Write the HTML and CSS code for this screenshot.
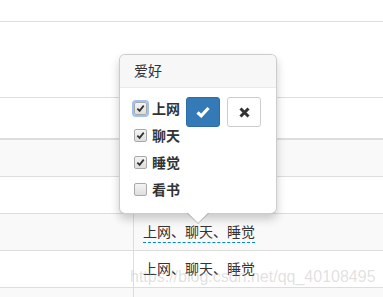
FILE: index.html
```html
<!DOCTYPE html>
<html lang="en">
<head>
    <meta charset="UTF-8">
    <title>爱好</title>
    <link rel="stylesheet" href="styles.css">
</head>
<body>
    <div class="table">
        <div class="row row-top"></div>
        <div class="row row-tall"></div>
        <div class="row row-head"></div>
        <div class="row body-row striped"><div class="cell"></div><div class="cell col2"></div></div>
        <div class="row body-row"><div class="cell"></div><div class="cell col2"></div></div>
        <div class="row body-row striped"><div class="cell"></div><div class="cell col2"><a class="editable" href="#">上网、聊天、睡觉</a></div></div>
        <div class="row body-row"><div class="cell"></div><div class="cell col2">上网、聊天、睡觉</div></div>
        <div class="row body-row striped last"><div class="cell"></div><div class="cell col2"></div></div>
    </div>

    <div class="popover">
        <div class="popover-title">爱好</div>
        <div class="popover-content">
            <div class="checklist">
                <label class="check-item"><span class="box checked focus"><svg viewBox="0 0 10 10" width="9" height="9"><path d="M1.5 5.2 L4 7.6 L8.6 1.8" fill="none" stroke="#333" stroke-width="2"/></svg></span>上网</label>
                <label class="check-item"><span class="box checked"><svg viewBox="0 0 10 10" width="9" height="9"><path d="M1.5 5.2 L4 7.6 L8.6 1.8" fill="none" stroke="#333" stroke-width="2"/></svg></span>聊天</label>
                <label class="check-item"><span class="box checked"><svg viewBox="0 0 10 10" width="9" height="9"><path d="M1.5 5.2 L4 7.6 L8.6 1.8" fill="none" stroke="#333" stroke-width="2"/></svg></span>睡觉</label>
                <label class="check-item"><span class="box"></span>看书</label>
            </div>
            <button class="btn btn-primary"><svg viewBox="0 0 14 12" width="14" height="12"><path d="M1.5 6.5 L5.2 9.8 L12.5 2" fill="none" stroke="#fff" stroke-width="3.2"/></svg></button>
            <button class="btn btn-default"><svg viewBox="0 0 11 11" width="11" height="11"><path d="M1.5 1.5 L9.5 9.5 M9.5 1.5 L1.5 9.5" fill="none" stroke="#333" stroke-width="3"/></svg></button>
        </div>
        <div class="arrow"></div>
    </div>

    <div class="watermark">https://blog.csdn.net/qq_40108495</div>
</body>
</html>
```

FILE: styles.css
```css
html, body {
    overflow: hidden;
}
body {
    margin: 0;
    font-family: "Liberation Sans", "Noto Sans CJK SC", sans-serif;
    font-size: 14px;
    color: #333;
    background: #fff;
}
.row {
    border-bottom: 1px solid #ddd;
}
.row-top {
    height: 21px;
}
.row-tall {
    height: 75px;
}
.row-head {
    height: 40px;
    border-bottom: 2px solid #ddd;
}
.body-row {
    display: grid;
    grid-template-columns: 133px 1fr;
    height: 36px;
}
.body-row.last {
    height: 9px;
    border-bottom: none;
}
.striped {
    background-color: #f9f9f9;
}
.cell {
    display: flex;
    align-items: center;
    line-height: 20px;
}
.col2 {
    border-left: 1px solid #ddd;
    padding-left: 9px;
}
.editable {
    color: #333;
    text-decoration: none;
    border-bottom: 1px dashed #08c;
}
.popover {
    position: absolute;
    left: 119px;
    top: 54px;
    width: 158px;
    box-sizing: border-box;
    background: #fff;
    border: 1px solid rgba(0, 0, 0, 0.2);
    border-radius: 6px;
    box-shadow: 0 5px 10px rgba(0, 0, 0, 0.2);
}
.popover-title {
    padding: 8px 14px;
    line-height: 16px;
    background: #f7f7f7;
    border-bottom: 1px solid #ebebeb;
    border-radius: 5px 5px 0 0;
}
.popover-content {
    display: flex;
    align-items: flex-start;
    padding: 9px 14px 13px;
}
.checklist {
    display: flex;
    flex-direction: column;
    gap: 5px;
    margin-right: 6px;
}
.check-item {
    display: flex;
    align-items: center;
    height: 22px;
    font-weight: bold;
}
.box {
    display: flex;
    align-items: center;
    justify-content: center;
    width: 11px;
    height: 11px;
    margin-right: 5px;
    border: 1px solid #a9a9a9;
    border-radius: 2px;
    background: linear-gradient(#f4f4f4, #dedede);
}
.box.focus {
    box-shadow: 0 0 0 2px #9ec1f0;
}
.btn {
    display: flex;
    align-items: center;
    justify-content: center;
    width: 34px;
    height: 30px;
    padding: 0;
    border: 1px solid;
    border-radius: 3px;
    cursor: pointer;
}
.btn-primary {
    background-color: #337ab7;
    border-color: #2e6da4;
    margin-right: 7px;
}
.btn-default {
    background-color: #fff;
    border-color: #ccc;
}
.arrow,
.arrow::after {
    position: absolute;
    width: 0;
    height: 0;
    border: solid transparent;
}
.arrow {
    left: 67px;
    bottom: -11px;
    border-width: 11px 11px 0;
    border-top-color: rgba(0, 0, 0, 0.25);
}
.arrow::after {
    content: "";
    left: -10px;
    bottom: 1px;
    border-width: 10px 10px 0;
    border-top-color: #fff;
}
.watermark {
    position: absolute;
    left: 130px;
    top: 268px;
    font-size: 16px;
    color: rgba(150, 150, 150, 0.3);
    white-space: nowrap;
}
```
